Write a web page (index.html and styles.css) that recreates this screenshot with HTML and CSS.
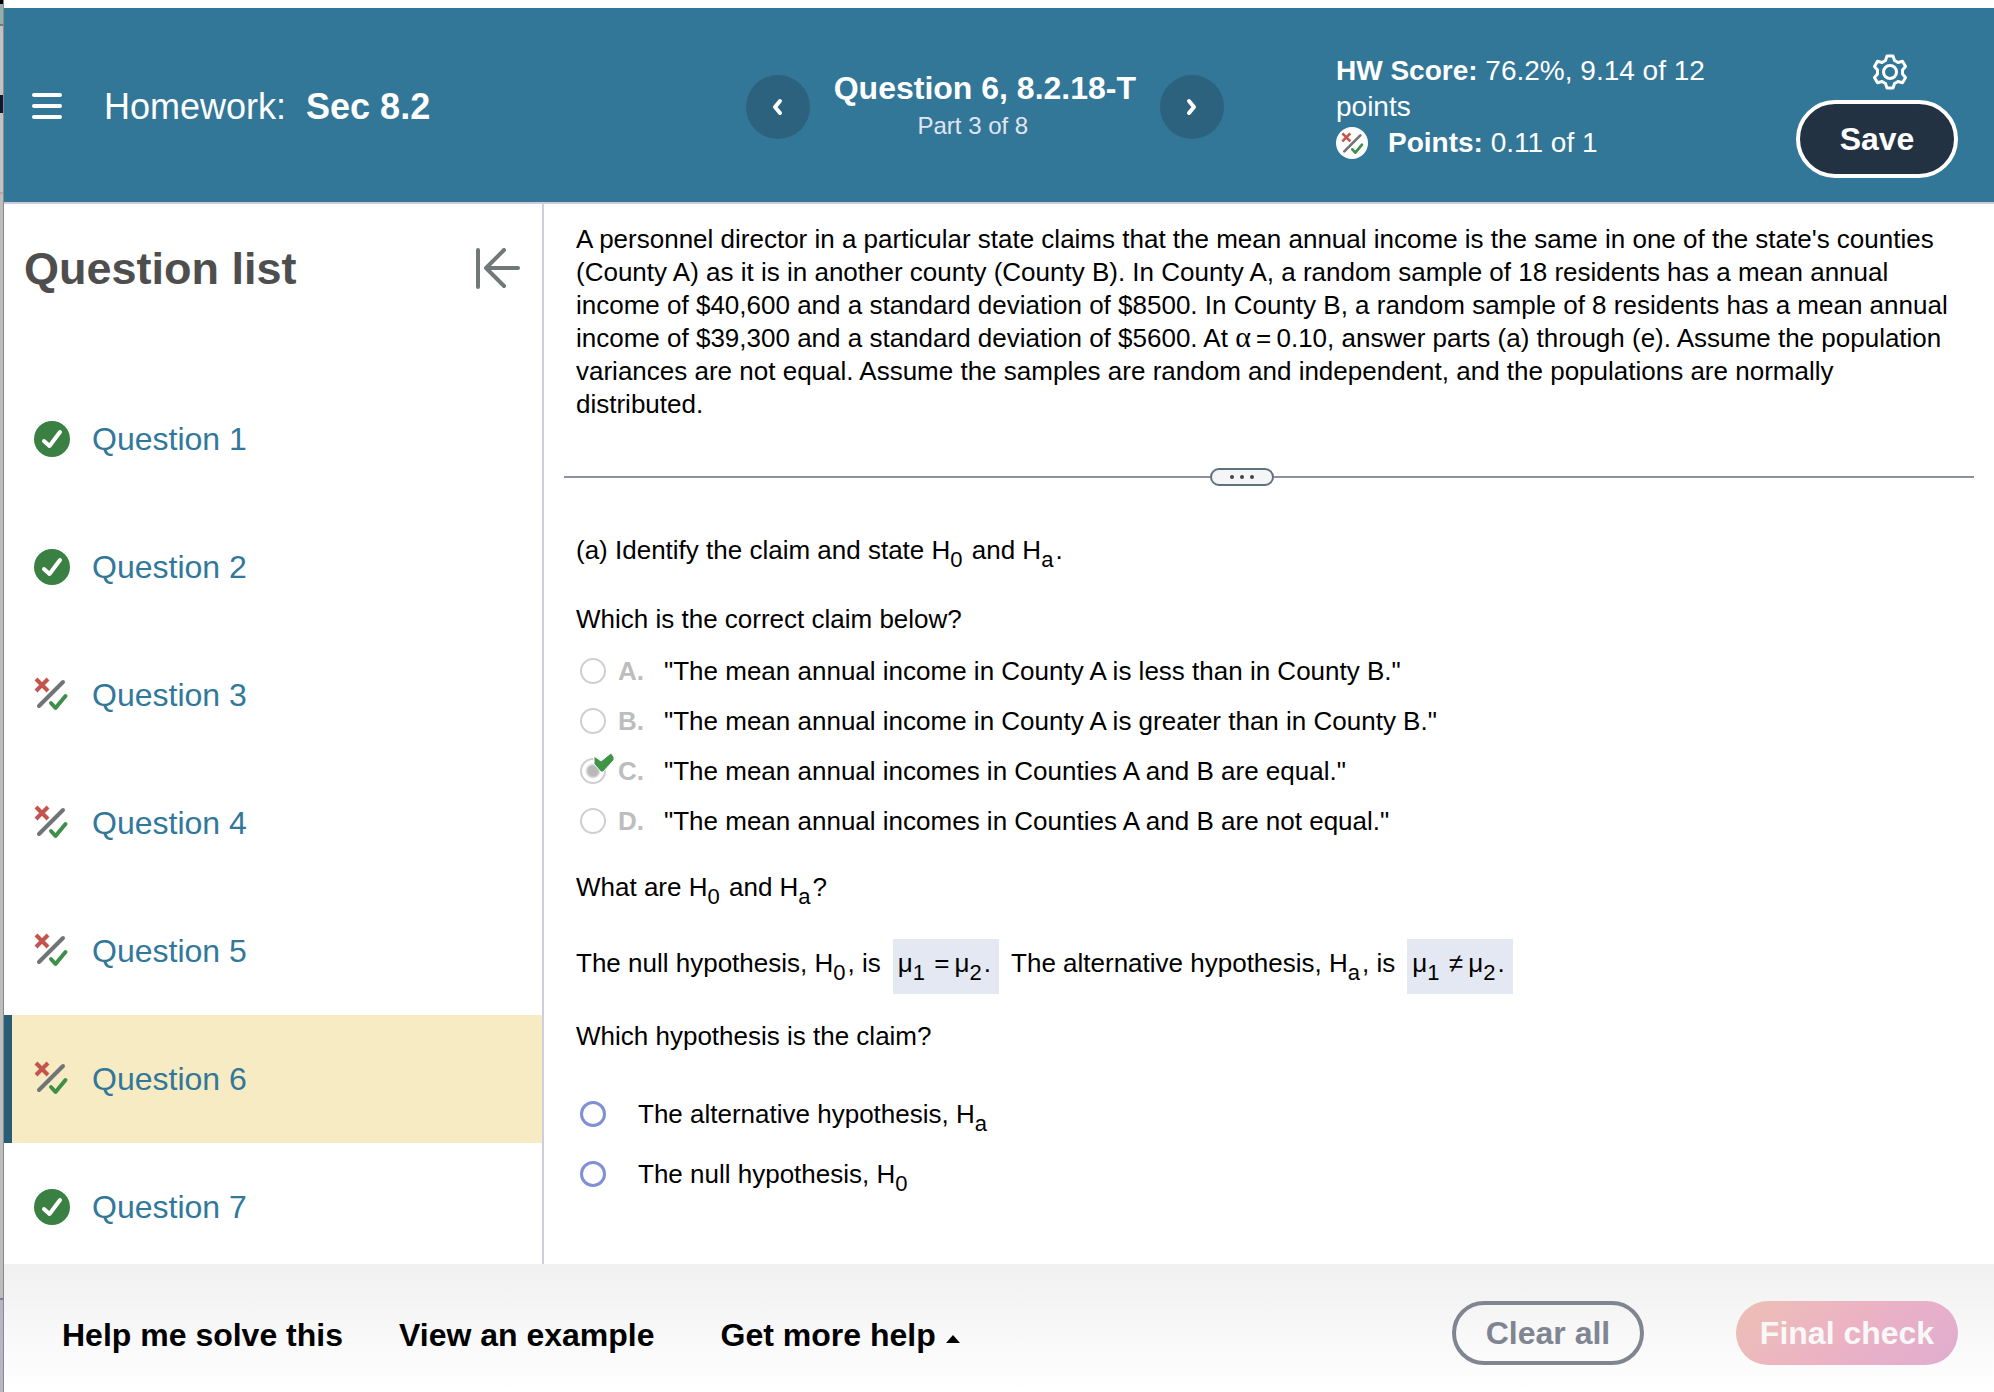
FILE: index.html
```html
<!DOCTYPE html>
<html lang="en">
<head>
<meta charset="utf-8">
<title>Homework: Sec 8.2</title>
<link rel="stylesheet" href="styles.css">
</head>
<body>
<svg class="defs" aria-hidden="true">
  <symbol id="correct" viewBox="0 0 36 36">
    <circle cx="18" cy="18" r="18" fill="#3a8043"/>
    <path d="M10 20 L15.500 25 L26 11" fill="none" stroke="#fff" stroke-width="4" stroke-linecap="round" stroke-linejoin="round"/>
  </symbol>
  <symbol id="partial" viewBox="0 0 36 36">
    <path d="M2 2 L14 14 M14 2 L2 14" fill="none" stroke="#c4544c" stroke-width="4"/>
    <path d="M29 5 L5 29" fill="none" stroke="#707476" stroke-width="4" stroke-linecap="round"/>
    <path d="M17 26 L21.500 31 L31.500 19" fill="none" stroke="#3f8f4b" stroke-width="4" stroke-linecap="round" stroke-linejoin="round"/>
  </symbol>
</svg>
<div class="window">
  <div class="backdrop"></div>
  <div class="app">
    <header class="topbar">
      <div class="assignment">
        <button class="icon-button" aria-label="Menu">
          <svg width="30" height="28" viewBox="0 0 30 28" fill="none" stroke="#fff" stroke-width="4" stroke-linecap="round"><path d="M2 2H28M2 13H28M2 24H28"/></svg>
        </button>
        <h1 class="assignment-title">Homework: <strong>Sec 8.2</strong></h1>
      </div>
      <nav class="question-nav" aria-label="Question">
        <button class="round-button" aria-label="Previous">
          <svg width="20" height="20" viewBox="0 0 20 20" fill="none" stroke="#fff" stroke-width="4" stroke-linecap="round" stroke-linejoin="round"><path d="M12 4L7 10L12 16"/></svg>
        </button>
        <div class="question-heading">
          <h2 class="question-title">Question 6, 8.2.18-T</h2>
          <div class="question-part">Part 3 of 8</div>
        </div>
        <button class="round-button" aria-label="Next">
          <svg width="20" height="20" viewBox="0 0 20 20" fill="none" stroke="#fff" stroke-width="4" stroke-linecap="round" stroke-linejoin="round"><path d="M7 4L12 10L7 16"/></svg>
        </button>
      </nav>
      <div class="score">
        <div><strong>HW Score:</strong> 76.2%, 9.14 of 12<br>points</div>
        <div class="score-points">
          <svg width="32" height="32" viewBox="0 0 32 32"><circle cx="16" cy="16" r="16" fill="#fff"/><use href="#partial" x="5" y="5" width="24" height="24"/></svg>
          <span><strong>Points:</strong> 0.11 of 1</span>
        </div>
      </div>
      <div class="actions">
        <button class="icon-button settings" aria-label="Settings">
          <svg width="36" height="36" viewBox="0 0 36 36" fill="none" stroke="#fff" stroke-width="3" stroke-linejoin="round"><path d="M15 2H21L22.500 6.500L26 8.500L30.500 7.300L33.500 12.500L30.500 16V20L33.500 23.500L30.500 28.700L26 27.500L22.500 29.500L21 34H15L13.500 29.500L10 27.500L5.500 28.700L2.500 23.500L5.500 20V16L2.500 12.500L5.500 7.300L10 8.500L13.500 6.500Z"/><circle cx="18" cy="18" r="6.500"/></svg>
        </button>
        <button class="save">Save</button>
      </div>
    </header>
    <div class="workspace">
      <aside class="sidebar">
        <div class="sidebar-head">
          <h2 class="sidebar-title">Question list</h2>
          <button class="icon-button" aria-label="Collapse list">
            <svg width="46" height="42" viewBox="0 0 46 42" fill="none" stroke="#717878" stroke-width="4" stroke-linecap="round" stroke-linejoin="round"><path d="M4 2V39M44 20H13M30 2L12 20L30 38"/></svg>
          </button>
        </div>
        <ul class="questions">
          <li><a class="question" href="#q1"><svg class="status"><use href="#correct"/></svg>Question 1</a></li>
          <li><a class="question" href="#q2"><svg class="status"><use href="#correct"/></svg>Question 2</a></li>
          <li><a class="question" href="#q3"><svg class="status"><use href="#partial"/></svg>Question 3</a></li>
          <li><a class="question" href="#q4"><svg class="status"><use href="#partial"/></svg>Question 4</a></li>
          <li><a class="question" href="#q5"><svg class="status"><use href="#partial"/></svg>Question 5</a></li>
          <li><a class="question current" href="#q6" aria-current="true"><svg class="status"><use href="#partial"/></svg>Question 6</a></li>
          <li><a class="question" href="#q7"><svg class="status"><use href="#correct"/></svg>Question 7</a></li>
        </ul>
      </aside>
      <main class="content">
        <p class="problem">A personnel director in a particular state claims that the mean annual income is the same in one of the state's counties<br>(County A) as it is in another county (County B). In County A, a random sample of 18 residents has a mean annual<br>income of $40,600 and a standard deviation of $8500. In County B, a random sample of 8 residents has a mean annual<br>income of $39,300 and a standard deviation of $5600. At <span class="greek">α</span>&#8201;=&#8201;0.10, answer parts (a) through (e). Assume the population<br>variances are not equal. Assume the samples are random and independent, and the populations are normally<br>distributed.</p>
        <div class="divider">
          <button class="divider-handle" aria-label="Resize"><i></i><i></i><i></i></button>
        </div>
        <p class="part">(a) Identify the claim and state H<sub>0</sub> and H<sub>a</sub>.</p>
        <p class="prompt">Which is the correct claim below?</p>
        <div class="choices">
          <label class="choice"><span class="mark"><input type="radio" name="claim" disabled></span><b>A.</b><span>"The mean annual income in County A is less than in County B."</span></label>
          <label class="choice"><span class="mark"><input type="radio" name="claim" disabled></span><b>B.</b><span>"The mean annual income in County A is greater than in County B."</span></label>
          <label class="choice"><span class="mark"><input type="radio" name="claim" disabled checked><svg class="tick" width="22" height="22" viewBox="0 0 22 22"><path d="M1 3L8 8L18 0L21 4L21 7L10 19L8 19L1 11Z" fill="#3f9447" stroke="#fff" stroke-width="1"/></svg></span><b>C.</b><span>"The mean annual incomes in Counties A and B are equal."</span></label>
          <label class="choice"><span class="mark"><input type="radio" name="claim" disabled></span><b>D.</b><span>"The mean annual incomes in Counties A and B are not equal."</span></label>
        </div>
        <p class="hypotheses-prompt">What are H<sub>0</sub> and H<sub>a</sub>?</p>
        <div class="hypotheses">
          <span>The null hypothesis, H<sub>0</sub>, is</span>
          <span class="answer">μ<sub>1</sub> =&#8201;μ<sub>2</sub>.</span>
          <span>The alternative hypothesis, H<sub>a</sub>, is</span>
          <span class="answer">μ<sub>1</sub> ≠&#8201;μ<sub>2</sub>.</span>
        </div>
        <p class="claim-prompt">Which hypothesis is the claim?</p>
        <div class="options">
          <label class="option"><input type="radio" name="hypothesis"><span>The alternative hypothesis, H<sub>a</sub></span></label>
          <label class="option"><input type="radio" name="hypothesis"><span>The null hypothesis, H<sub>0</sub></span></label>
        </div>
      </main>
    </div>
    <footer class="bottombar">
      <div class="help">
        <button class="help-button">Help me solve this</button>
        <button class="help-button">View an example</button>
        <button class="help-button help-menu">Get more help <svg width="14" height="8" viewBox="0 0 14 8"><path d="M0 8L7 0L14 8Z"/></svg></button>
      </div>
      <button class="clear">Clear all</button>
      <button class="final" disabled>Final check</button>
    </footer>
  </div>
</div>
</body>
</html>
```
FILE: styles.css
```css
* { box-sizing: border-box; }
body, h1, h2, p, ul { margin: 0; padding: 0; }
body { font-family: "Liberation Sans", Arial, sans-serif; font-size: 26px; line-height: 32px; color: #000; background: #fff; }
button { font: inherit; font-weight: bold; font-size: 32px; border: 0; padding: 0; background: none; cursor: pointer; }
svg { display: block; flex: none; }
.defs { position: absolute; width: 0; height: 0; }

.window { display: flex; height: 100vh; }
.backdrop {
  width: 4px;
  border-right: 1px solid #8a8a8a;
  background: linear-gradient(#000 0 4px, #8fb0ae 4px 24px, #777 24px 26px, #c2c2c2 26px 95px, #14182c 95px 113px, #c2c2c2 113px 192px, #aaa 192px 194px, #bdbdbd 194px 1298px, #7a7ca4 1298px 1300px, #b6b6c4 1300px);
}
.app { flex: 1; min-width: 0; display: flex; flex-direction: column; padding-top: 8px; }

.topbar { display: flex; align-items: center; min-height: 196px; padding: 4px 36px 0 28px; background: #327797; border-bottom: 2px solid #cbcddb; color: #fff; }
.assignment { flex: 1; display: flex; align-items: center; gap: 42px; }
.assignment-title { font-size: 36px; line-height: 40px; font-weight: normal; }
.assignment-title strong { margin-left: 10px; }
.question-nav { display: flex; align-items: center; gap: 24px; text-align: center; }
.question-heading { padding-bottom: 2px; }
.round-button { display: flex; align-items: center; justify-content: center; width: 64px; height: 64px; border-radius: 50%; background: #2c627d; }
.question-title { font-size: 32px; line-height: 40px; }
.question-part { padding-right: 24px; font-size: 24px; line-height: 36px; color: #e1e5f3; }
.score { width: 380px; margin-left: 112px; font-size: 28px; line-height: 36px; }
.score-points { display: flex; align-items: center; gap: 20px; }
.actions { display: flex; flex-direction: column; gap: 10px; margin: 18px 0 0 80px; }
.settings { align-self: flex-end; margin-right: 50px; }
.save { width: 162px; height: 78px; border: 4px solid #fff; border-radius: 39px; background: #223243; color: #fff; }

.workspace { flex: 1; min-height: 0; display: flex; overflow: hidden; }
.sidebar { width: 540px; flex: none; border-right: 2px solid #cdcfdf; }
.sidebar-head { display: flex; align-items: center; justify-content: space-between; height: 171px; padding: 0 22px 42px 20px; }
.sidebar-title { font-size: 45px; line-height: 56px; color: #4e4e4e; }
.questions { list-style: none; }
.question { display: flex; align-items: center; gap: 22px; height: 128px; padding-left: 30px; font-size: 32px; color: #31789a; text-decoration: none; }
.question.current { padding-left: 22px; border-left: 8px solid #265c76; background: #f7ebc4; }
.status { width: 36px; height: 36px; }

.content { flex: 1; min-width: 0; padding: 19px 20px 0; }
.content > :not(.divider) { margin-left: 12px; }
.problem { line-height: 33px; white-space: nowrap; }
.greek { font-family: "Liberation Serif", serif; font-size: 30px; line-height: 1px; }
.divider { display: flex; align-items: center; justify-content: center; margin: 47px 0 48px; }
.divider::before, .divider::after { content: ""; height: 2px; background: #8b91a1; }
.divider::before { flex: 12; }
.divider::after { flex: 13; }
.divider-handle { display: flex; align-items: center; justify-content: center; gap: 6px; width: 64px; height: 18px; border: 2px solid #61717c; border-radius: 9px; background: #f4f5f7; }
.divider-handle i { width: 4px; height: 4px; border-radius: 50%; background: #444; }
sub { margin-right: 2px; font-size: 22px; line-height: 1px; vertical-align: -8px; }
.prompt { margin-top: 37px; }
.choices { margin-top: 11px; }
.choice { display: flex; align-items: center; height: 50px; padding-left: 4px; }
.choice b { width: 46px; color: #bdbdbd; }
.mark { position: relative; display: flex; margin-right: 12px; }
.tick { position: absolute; left: 13px; top: -5px; }
input[type="radio"] { appearance: none; width: 26px; height: 26px; margin: 0; border: 3px solid #7f90d4; border-radius: 50%; background: #fff; }
input[type="radio"]:disabled { border: 2px solid #cfcfcf; }
input[type="radio"]:disabled:checked { background: radial-gradient(circle, #b9b9b9 5px, #fff 8px); }
.hypotheses-prompt { margin-top: 25px; }
.hypotheses { display: flex; align-items: baseline; gap: 12px; margin-top: 36px; white-space: nowrap; }
.answer { padding: 8px 8px 15px 5px; background: #e4e8f2; }
.claim-prompt { margin-top: 26px; }
.options { margin-top: 32px; }
.option { display: flex; align-items: center; gap: 32px; height: 60px; padding-left: 4px; }

.bottombar { display: flex; align-items: center; min-height: 128px; padding: 10px 36px 0 58px; background: linear-gradient(#f0f0f0, #fff); }
.help { flex: 1; display: flex; gap: 56px; padding-top: 4px; }
.help-button { display: flex; align-items: center; gap: 10px; }
.help-menu { margin-left: 10px; }
.help-menu svg { margin-top: 8px; }
.clear, .final { height: 64px; border-radius: 32px; }
.clear { width: 192px; border: 4px solid #808592; color: #808592; }
.final { width: 222px; margin-left: 92px; background: linear-gradient(135deg, #ecc0b5, #ecb2c4 50%, #dfadd0); color: #f8f8f8; }
```
